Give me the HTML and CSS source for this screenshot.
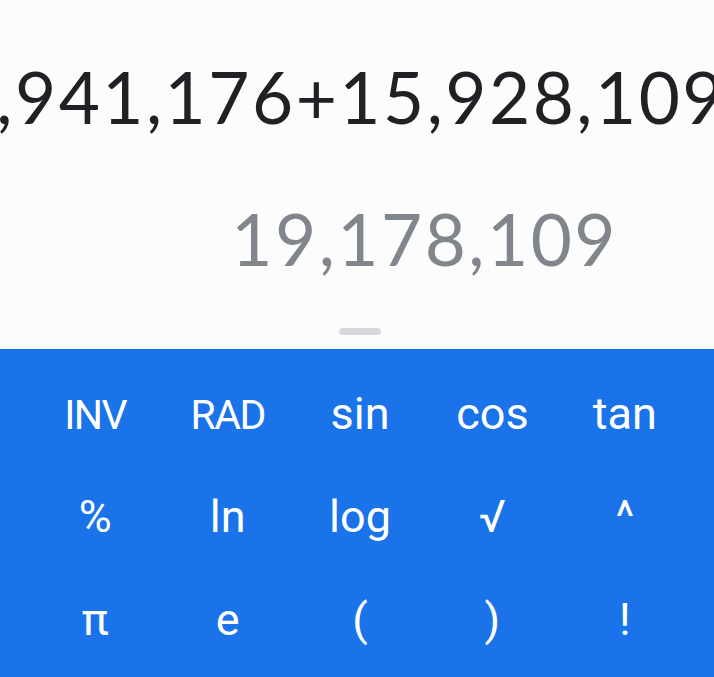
FILE: index.html
```html
<!DOCTYPE html>
<html lang="en">
<head>
  <meta charset="UTF-8" />
  <meta name="viewport" content="width=device-width, initial-scale=1.0" />
  <title>Calculator</title>
  <link rel="stylesheet" href="styles.css">
</head>
<body>

  <!-- Display: expression, live result, drag handle -->
  <section class="display">
    <div class="formula">
      <span class="formula-text">,941,176+15,928,109</span>
    </div>
    <div class="result">
      <span class="result-text">19,178,109</span>
    </div>
    <div class="handle-row">
      <div class="handle"></div>
    </div>
  </section>

  <!-- Advanced functions pad -->
  <section class="pad">
    <button class="key"><span class="caps">INV</span></button>
    <button class="key"><span class="caps">RAD</span></button>
    <button class="key">sin</button>
    <button class="key">cos</button>
    <button class="key">tan</button>

    <button class="key">%</button>
    <button class="key">ln</button>
    <button class="key">log</button>
    <button class="key">√</button>
    <button class="key">^</button>

    <button class="key">π</button>
    <button class="key">e</button>
    <button class="key">(</button>
    <button class="key">)</button>
    <button class="key">!</button>
  </section>

</body>
</html>
```

FILE: styles.css
```css
body {
  margin: 0;
  width: 714px;
  height: 677px;
  overflow: hidden;
  font-family: 'Roboto', sans-serif;
  background-color: #1a73e8;
}

.display {
  height: 349px;
  background-color: #fcfcfc;
  display: flex;
  flex-direction: column;
}

.formula {
  margin-top: 54px;
  display: flex;
  justify-content: flex-end;
  overflow: hidden;
}

.formula-text,
.result-text {
  font-family: 'Lato', sans-serif;
  font-size: 71px;
  line-height: 85px;
  letter-spacing: 2.5px;
  white-space: nowrap;
}

.formula-text {
  color: #202124;
  margin-right: -12px;
}

.result {
  margin-top: 57px;
  display: flex;
  justify-content: flex-end;
  padding-right: 96px;
}

.result-text {
  color: #80868b;
}

.handle-row {
  margin-top: auto;
  margin-bottom: 14px;
  display: flex;
  justify-content: center;
  padding-left: 6px;
}

.handle {
  width: 42px;
  height: 7px;
  border-radius: 4px;
  background-color: #d7d8dc;
}

.pad {
  display: grid;
  grid-template-columns: repeat(5, 1fr);
  grid-auto-rows: 103px;
  padding: 13px 23px 0 29px;
}

.key {
  background: transparent;
  border: none;
  padding: 0;
  color: #fff;
  font-family: 'Roboto', sans-serif;
  font-size: 45px;
  line-height: 103px;
  text-align: center;
  cursor: pointer;
}

.key .caps {
  font-size: 41px;
  letter-spacing: -1.5px;
}
```
